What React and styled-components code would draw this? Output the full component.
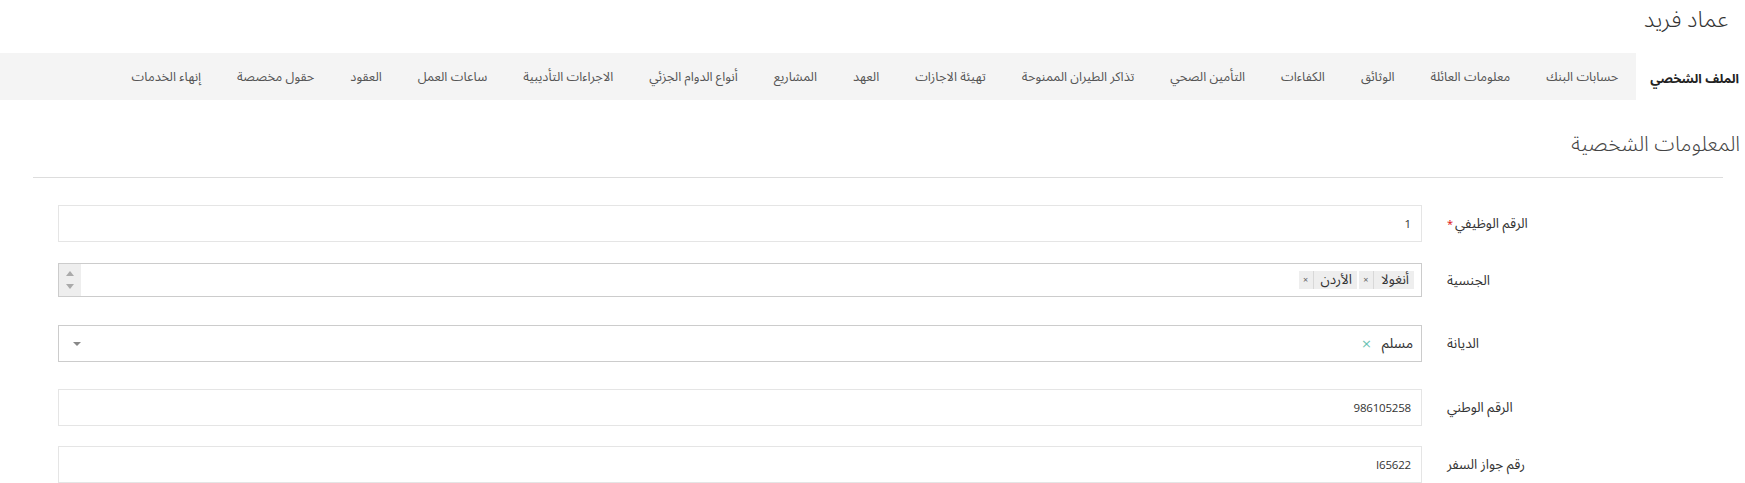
import React from 'react'
import styled, { createGlobalStyle } from 'styled-components'

const GlobalStyle = createGlobalStyle`
  body {
    margin: 0;
    background: #fff;
    font-family: "Noto Sans Arabic", "DejaVu Sans", "Open Sans", sans-serif;
    color: #333;
  }
`

const tabs = [
  'الملف الشخصي',
  'حسابات البنك',
  'معلومات العائلة',
  'الوثائق',
  'الكفاءات',
  'التأمين الصحي',
  'تذاكر الطيران الممنوحة',
  'تهيئة الاجازات',
  'العهد',
  'المشاريع',
  'أنواع الدوام الجزئي',
  'الاجراءات التأديبية',
  'ساعات العمل',
  'العقود',
  'حقول مخصصة',
  'إنهاء الخدمات',
]

const Page = styled.div`
  direction: rtl;
  width: 1745px;
`

const Header = styled.div`
  height: 53px;
  padding: 2px 13px 0 0;
  box-sizing: border-box;
`

const Title = styled.h1`
  display: inline-block;
  margin: 0;
  padding: 0 4px;
  font-size: 23px;
  font-weight: 300;
  line-height: 36px;
  color: #333;
`

const TabBar = styled.ul`
  display: flex;
  margin: 0;
  padding: 0;
  list-style: none;
  height: 47px;
  background: #f4f4f4;
`

const Tab = styled.li`
  display: flex;
  align-items: center;
  padding: ${p => (p.$active ? '3px 6px 0 14px' : '0 18px')};
  background: ${p => (p.$active ? '#fff' : 'transparent')};
  font-size: 12.75px;
  font-weight: ${p => (p.$active ? 700 : 400)};
  color: ${p => (p.$active ? '#222' : '#555')};
  white-space: nowrap;
`

const Section = styled.div`
  padding: 29px 22px 0 33px;
`

const Heading = styled.h3`
  margin: 0 -17px 18px 0;
  font-size: 21px;
  font-weight: 300;
  line-height: 30px;
  color: #444;
`

const Rule = styled.hr`
  margin: 0;
  border: none;
  border-top: 1px solid #ddd;
`

const Form = styled.div`
  padding: 0 0 0 25px;
`

const Row = styled.div`
  display: grid;
  grid-template-columns: 301px 1fr;
  align-items: center;
  margin-top: ${p => p.$space}px;
`

const Label = styled.label`
  text-align: left;
  padding-left: 25px;
  font-size: 13.5px;
  color: #333;
`

const Star = styled.span`
  color: #e02222;
  font-size: 11px;
  margin-right: 2px;
`

const Input = styled.div`
  box-sizing: border-box;
  height: ${p => p.$h || 37}px;
  border: 1px solid ${p => (p.$dark ? '#ccc' : '#e5e5e5')};
  display: flex;
  align-items: center;
  padding: 0 10px;
  font-family: "Open Sans", "Noto Sans Arabic", "DejaVu Sans", sans-serif;
  font-size: 11.5px;
  letter-spacing: -0.2px;
  color: #333;
`

const Chips = styled.div`
  display: flex;
  gap: 2px;
  flex: 1;
  margin-right: -3px;
`

const Chip = styled.span`
  display: flex;
  align-items: center;
  height: 18px;
  background: #eee;
  font-family: "Noto Sans Arabic", "DejaVu Sans", sans-serif;
  font-size: 13.5px;
  letter-spacing: 0;
  color: #333;
`

const ChipText = styled.span`
  padding: 0 5px 0 7px;
  border-left: 1px solid #d8d8d8;
  line-height: 18px;
`

const ChipRemove = styled.span`
  width: 14px;
  text-align: center;
  font-size: 9px;
  color: #666;
`

const Spinner = styled.div`
  align-self: stretch;
  width: 22px;
  margin-left: -10px;
  background: #eee;
  display: flex;
  flex-direction: column;
  align-items: center;
  justify-content: center;
  gap: 8px;
`

const Arrow = styled.span`
  width: 0;
  height: 0;
  border-left: 4.5px solid transparent;
  border-right: 4.5px solid transparent;
  ${p => (p.$up ? 'border-bottom: 5px solid #aaa;' : 'border-top: 5px solid #aaa;')}
`

const SelectValue = styled.span`
  font-family: "Noto Sans Arabic", "DejaVu Sans", sans-serif;
  font-size: 14px;
  letter-spacing: 0;
  color: #333;
  margin-right: -2px;
`

const Clear = styled.span`
  margin-right: 10px;
  color: #6cc3b4;
  font-size: 13px;
  font-family: "DejaVu Sans", sans-serif;
`

const Caret = styled.span`
  margin-right: auto;
  margin-left: 4px;
  width: 0;
  height: 0;
  border-left: 4px solid transparent;
  border-right: 4px solid transparent;
  border-top: 4px solid #888;
`

export default function App() {
  return (
    <Page>
      <GlobalStyle />
      <Header>
        <Title>عماد فريد</Title>
      </Header>
      <TabBar>
        {tabs.map((t, i) => (
          <Tab key={t} $active={i === 0}>{t}</Tab>
        ))}
      </TabBar>
      <Section>
        <Heading>المعلومات الشخصية</Heading>
        <Rule />
        <Form>
          <Row $space={27}>
            <Label>الرقم الوظيفي<Star>*</Star></Label>
            <Input>1</Input>
          </Row>
          <Row $space={21}>
            <Label>الجنسية</Label>
            <Input $dark $h={34}>
              <Chips>
                <Chip><ChipText>أنغولا</ChipText><ChipRemove>×</ChipRemove></Chip>
                <Chip><ChipText>الأردن</ChipText><ChipRemove>×</ChipRemove></Chip>
              </Chips>
              <Spinner>
                <Arrow $up />
                <Arrow />
              </Spinner>
            </Input>
          </Row>
          <Row $space={28}>
            <Label>الديانة</Label>
            <Input $dark>
              <SelectValue>مسلم</SelectValue>
              <Clear>×</Clear>
              <Caret />
            </Input>
          </Row>
          <Row $space={27}>
            <Label>الرقم الوطني</Label>
            <Input>986105258</Input>
          </Row>
          <Row $space={20}>
            <Label>رقم جواز السفر</Label>
            <Input>I65622</Input>
          </Row>
        </Form>
      </Section>
    </Page>
  )
}
